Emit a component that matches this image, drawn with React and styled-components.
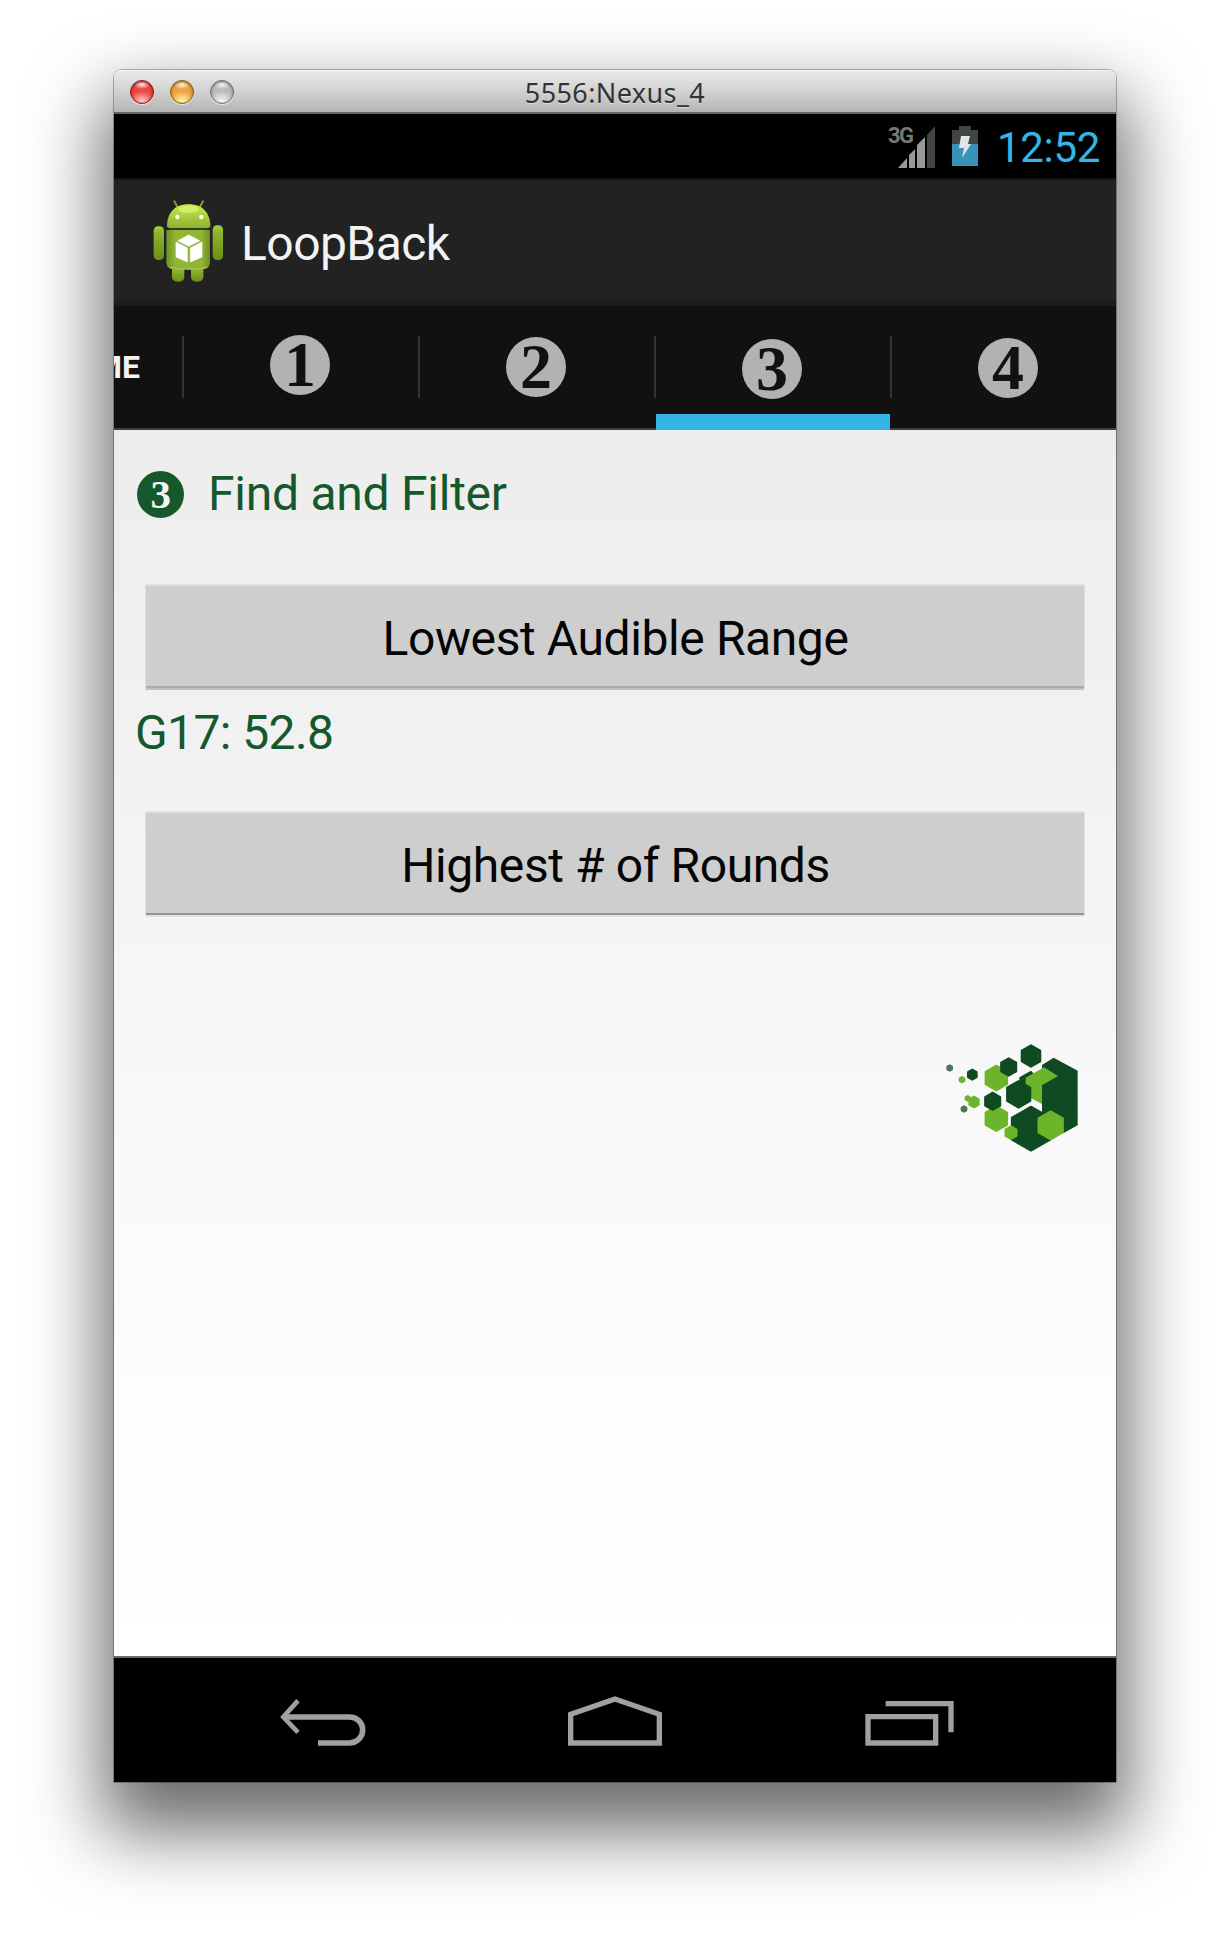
import React from 'react';
import styled, { createGlobalStyle } from 'styled-components';

const GlobalStyle = createGlobalStyle`
  * { box-sizing: border-box; }
  body { margin: 0; background: #fff; font-family: Roboto, sans-serif; }
`;

const Desktop = styled.main`
  width: 1230px;
  height: 1940px;
  padding: 70px 114px 0;
  overflow: hidden;
`;

const Window = styled.section`
  width: 1002px;
  height: 1712px;
  display: flex;
  flex-direction: column;
  border-radius: 8px 8px 0 0;
  box-shadow: 0 0 0 1px rgba(0, 0, 0, 0.28), 0 38px 72px 12px rgba(0, 0, 0, 0.58);
`;

const TitleBar = styled.header`
  height: 44px;
  padding: 0 16px;
  display: grid;
  grid-template-columns: 1fr auto 1fr;
  align-items: center;
  border-radius: 8px 8px 0 0;
  border-bottom: 2px solid #676767;
  box-shadow: inset 0 1px 0 #f6f6f6;
  background: linear-gradient(#ebebeb, #d2d2d2 50%, #b5b5b5);
`;

const Lights = styled.div`
  display: flex;
  gap: 16px;
  padding-top: 2px;
`;

const Light = styled.span`
  width: 24px;
  height: 24px;
  border-radius: 50%;
  border: 1px solid ${(p) => p.$rim};
  background:
    radial-gradient(ellipse 9px 5px at 50% 3px, rgba(255, 255, 255, 1), rgba(255, 255, 255, 0)),
    radial-gradient(ellipse 13px 12px at 50% 100%, ${(p) => p.$glow} 15%, transparent),
    ${(p) => p.$color};
  box-shadow: inset 0 1px 3px ${(p) => p.$rim}, 0 1px 0 rgba(255, 255, 255, 0.6);
`;

const WindowTitle = styled.h1`
  margin: 0;
  padding-top: 4px;
  font: 400 27px/36px 'Noto Sans', sans-serif;
  letter-spacing: 0.4px;
  color: #333;
  text-shadow: 0 1px 0 rgba(255, 255, 255, 0.5);
`;

const StatusBar = styled.div`
  height: 66px;
  padding: 12px 18px 0 0;
  display: flex;
  justify-content: flex-end;
  align-items: flex-start;
  background: #000;
  border-bottom: 2px solid #141414;
`;

const SignalGroup = styled.div`
  display: flex;
  width: 48px;
  margin-right: 16px;
`;

const Network = styled.span`
  width: 10px;
  font: 700 22px/20px Roboto, sans-serif;
  letter-spacing: -1.7px;
  color: #777;
`;

const Clock = styled.time`
  width: 101px;
  margin-left: 19px;
  font: 400 42px/44px Roboto, sans-serif;
  letter-spacing: -0.3px;
  white-space: nowrap;
  color: #33b5e5;
`;

const ActionBar = styled.div`
  height: 126px;
  padding-left: 37px;
  display: flex;
  align-items: center;
  background: #222;
  border-bottom: 6px solid #1c1c1c;
`;

const AppTitle = styled.h2`
  margin: 8px 0 0 18px;
  font: 400 48px/56px Roboto, sans-serif;
  letter-spacing: -0.55px;
  color: #f3f3f3;
`;

const TabBar = styled.nav`
  height: 124px;
  display: flex;
  overflow: hidden;
  background: #111;
  box-shadow: inset 0 -2px 0 #404040;
`;

const Tab = styled.div`
  flex: none;
  width: ${(p) => p.$width || 236}px;
  height: 124px;
  display: flex;
  justify-content: center;
  padding: ${(p) => p.$top}px 4px 0 0;
  background:
    linear-gradient(#333, #333) right 0 top 30px / 2px 62px no-repeat,
    linear-gradient(#33b5e5, #33b5e5) left 0 bottom 0 / ${(p) => (p.$active ? '234px 16px' : '0 0')} no-repeat;
`;

const HomeTab = styled(Tab)`
  justify-content: flex-end;
  padding: 42px 44px 0 0;
  font: 700 32px/38px Roboto, sans-serif;
  color: #f3f3f3;
`;

const Badge = styled.span`
  flex: none;
  width: ${(p) => p.$size}px;
  height: ${(p) => p.$size}px;
  border-radius: 50%;
  background: ${(p) => p.$bg};
  color: ${(p) => p.$fg};
  font: 700 ${(p) => p.$font}px/${(p) => p.$size - 1}px 'Liberation Serif', serif;
  text-align: center;
`;

const Content = styled.div`
  flex: 1;
  display: flex;
  flex-direction: column;
  padding: 40px 31px 0;
  background: linear-gradient(#ededed, #f0f0f0 18%, #f8f8f8 54%, #fefefe 85%, #fff);
  border-bottom: 2px solid #6b6b6b;
`;

const Heading = styled.h3`
  display: flex;
  align-items: center;
  gap: 24px;
  height: 48px;
  margin: 0 0 66px -8px;
  font: 400 48px/50px Roboto, sans-serif;
  letter-spacing: -0.25px;
  color: #15582c;
`;

const ActionButton = styled.button`
  flex: none;
  width: 940px;
  height: 106px;
  padding: 4px 0 0 1px;
  border: 1px solid #dfdfdf;
  border-top-width: 2px;
  border-bottom: 2px solid ${(p) => p.$edge};
  border-radius: 2px;
  background: #cecece;
  box-shadow: inset 0 -2px 0 ${(p) => p.$lip};
  color: #050505;
  font: 400 48px/56px Roboto, sans-serif;
  letter-spacing: -0.4px;
`;

const Result = styled.p`
  margin: 14px 0 0 -10px;
  height: 107px;
  font: 400 48px/58px Roboto, sans-serif;
  letter-spacing: -0.6px;
  color: #15582c;
`;

const Logo = styled.svg`
  align-self: flex-end;
  margin: 113px -15px 0 0;
`;

const NavBar = styled.footer`
  height: 124px;
  padding: 38px 162px 0 166px;
  display: flex;
  justify-content: space-between;
  background: #000;
`;

const hex = (x, y, r) =>
  [[0, -1], [0.87, -0.5], [0.87, 0.5], [0, 1], [-0.87, 0.5], [-0.87, -0.5]]
    .map(([dx, dy]) => `${x + dx * r},${y + dy * r}`)
    .join(' ');

const Hex = ({ x, y, r, light }) => (
  <polygon
    points={hex(x, y, r - 3)}
    fill={light ? '#6cb52a' : '#104a22'}
    stroke={light ? '#6cb52a' : '#104a22'}
    strokeWidth="6"
    strokeLinejoin="round"
  />
);

const Android = () => (
  <svg width="72" height="84" viewBox="0 0 216 252">
    <defs>
      <linearGradient id="head" x1="0" y1="0" x2="0" y2="1">
        <stop offset="0" stopColor="#c9e94e" />
        <stop offset="1" stopColor="#8db030" />
      </linearGradient>
      <linearGradient id="body" x1="0" y1="0" x2="1" y2="0">
        <stop offset="0" stopColor="#6e8f20" />
        <stop offset="0.2" stopColor="#91b634" />
        <stop offset="0.8" stopColor="#91b634" />
        <stop offset="1" stopColor="#6e8f20" />
      </linearGradient>
      <linearGradient id="limb" x1="0" y1="0" x2="0" y2="1">
        <stop offset="0" stopColor="#a9d140" />
        <stop offset="0.2" stopColor="#8db52c" />
        <stop offset="1" stopColor="#6b8c1c" />
      </linearGradient>
    </defs>
    <g transform="translate(2 2)">
      <path d="M68 8 L78 26 M154 8 L144 26" stroke="#7ea025" strokeWidth="6" strokeLinecap="round" />
      <path d="M46 84 C46 42 70 17 111 17 C152 17 176 42 176 84 Q172 89 160 89 H62 Q50 89 46 84Z" fill="url(#head)" />
      <ellipse cx="111" cy="32" rx="30" ry="11" fill="#e0f67c" opacity=".65" />
      <circle cx="77" cy="55" r="6.5" fill="#fff" />
      <circle cx="149" cy="55" r="6.5" fill="#fff" />
      <path d="M61 205 H98 V237 Q95 249 80 249 Q64 249 61 237Z" fill="url(#limb)" />
      <path d="M118 205 H155 V237 Q152 249 136 249 Q121 249 118 237Z" fill="url(#limb)" />
      <path d="M44 94 H175 V194 Q173 212 150 212 H68 Q46 212 44 194Z" fill="url(#body)" />
      <path d="M52 91.5 H168" stroke="#30400c" strokeWidth="5" />
      <path d="M54 206 Q110 216 166 206" fill="none" stroke="#a5bf62" strokeWidth="4" />
      <rect x="6" y="83" width="31" height="101" rx="13" fill="url(#limb)" />
      <rect x="183" y="80" width="31" height="104" rx="13" fill="url(#limb)" />
      <path d="M111 109 L144 126 L111 143 L79 126Z M73 130 L107 148 V190 L73 175Z M151 130 L116 148 V190 L151 175Z" fill="#fff" stroke="#fff" strokeWidth="2" strokeLinejoin="round" />
    </g>
  </svg>
);

const tabs = [
  { label: '1', top: 29 },
  { label: '2', top: 31 },
  { label: '3', top: 33, active: true },
  { label: '4', top: 32 },
];

export default function App() {
  return (
    <>
      <GlobalStyle />
      <Desktop>
        <Window>
          <TitleBar>
            <Lights>
              <Light $color="#ee4742" $rim="#8b1a18" $glow="#ffc9c6" />
              <Light $color="#eda33f" $rim="#8f5a12" $glow="#fff6a8" />
              <Light $color="#bcbcbc" $rim="#6e6e6e" $glow="#f4f4f4" />
            </Lights>
            <WindowTitle>5556:Nexus_4</WindowTitle>
          </TitleBar>
          <StatusBar>
            <SignalGroup>
              <Network>3G</Network>
              <svg width="38" height="44" viewBox="0 0 38 44">
                <path d="M37 0 V42 H29 V9Z" fill="#444" />
                <path d="M27 11 V42 H19 V19Z M17 23 V42 H11 V29Z M9 32 V42 H0Z" fill="#999" />
              </svg>
            </SignalGroup>
            <svg width="26" height="40" viewBox="0 0 26 40">
              <path d="M7 0 H19 V4 H26 V18 H0 V4 H7Z" fill="#444" />
              <rect y="18" width="26" height="22" fill="#3793b8" />
              <path d="M9 10 H18 L16 18 H19 L10 32 L12 22 H7Z" fill="#dce6ea" />
            </svg>
            <Clock>12:52</Clock>
          </StatusBar>
          <ActionBar>
            <Android />
            <AppTitle>LoopBack</AppTitle>
          </ActionBar>
          <TabBar>
            <HomeTab $width={70}>HOME</HomeTab>
            {tabs.map((tab) => (
              <Tab key={tab.label} $top={tab.top} $active={tab.active}>
                <Badge $size={60} $font={64} $bg="#b2b2b2" $fg="#111">{tab.label}</Badge>
              </Tab>
            ))}
          </TabBar>
          <Content>
            <Heading>
              <Badge $size={47} $font={41} $bg="#15582c" $fg="#f3f6f3">3</Badge>
              Find and Filter
            </Heading>
            <ActionButton $lip="#adadad" $edge="#c0c0c0">Lowest Audible Range</ActionButton>
            <Result>G17: 52.8</Result>
            <ActionButton $lip="#939393" $edge="#e2e2e2">Highest # of Rounds</ActionButton>
            <Logo width="180" height="140" viewBox="0 0 540 420">
              <path d="M401 83 L473 122 V286 L430 310 L366 250 V105Z" fill="#104a22" />
              <path d="M333 122 L298 142 V158 L330 180 L350 140Z" fill="#104a22" />
              <path d="M372 112 L414 138 L366 166 V222 L332 204 V180 L317 172 V143Z" fill="#6cb52a" />
              <Hex x={333} y={296} r={69} />
              <Hex x={392} y={286} r={45} light />
              <Hex x={333} y={78} r={35} />
              <Hex x={229} y={144} r={40} light />
              <Hex x={266} y={111} r={29} />
              <Hex x={296} y={193} r={43} />
              <Hex x={229} y={266} r={40} light />
              <Hex x={218} y={214} r={29} />
              <Hex x={273} y={308} r={22} light />
              <Hex x={157} y={134} r={18} />
              <Hex x={162} y={216} r={19} light />
              <Hex x={143} y={205} r={10} light />
              <Hex x={126} y={149} r={11} light />
              <g opacity="0.75">
                <Hex x={89} y={114} r={11} />
                <Hex x={132} y={237} r={11} />
              </g>
            </Logo>
          </Content>
          <NavBar>
            <svg width="86" height="50" viewBox="120 168 258 150" fill="none" stroke="#a0a0a0" strokeWidth="17">
              <path d="M130 231 H328 C350 231 368 247 368 270 C368 292 350 309 328 309 H234" />
              <path d="M174 182 L130 231 L174 277" strokeWidth="14" />
            </svg>
            <svg width="94" height="50" viewBox="984 168 282 150" fill="none" stroke="#a0a0a0" strokeWidth="16">
              <path d="M992 223 L1125 177 L1258 223 V309 H992Z" />
            </svg>
            <svg width="90" height="50" viewBox="133 168 270 150" fill="none" stroke="#a0a0a0" strokeWidth="16">
              <path d="M145 230 H348 V309 H145Z M198 191 H394 V277" />
            </svg>
          </NavBar>
        </Window>
      </Desktop>
    </>
  );
}
